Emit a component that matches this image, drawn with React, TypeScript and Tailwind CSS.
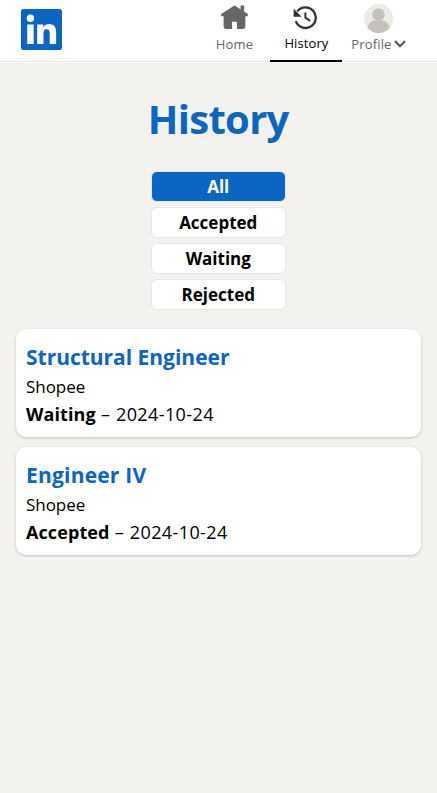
import React from "react";

const filters = ["All", "Accepted", "Waiting", "Rejected"];

const applications = [
  { title: "Structural Engineer", tracking: "tracking-[-0.02px]", company: "Shopee", status: "Waiting", date: "2024-10-24" },
  { title: "Engineer IV", tracking: "tracking-[0.2px]", company: "Shopee", status: "Accepted", date: "2024-10-24" },
];

function Logo() {
  return (
    <svg viewBox="0 0 41 41" className="ml-[21px] mt-[9px] size-[41px] shrink-0">
      <rect width="41" height="41" rx="2.8" fill="#0a66c2" />
      <circle cx="9.4" cy="9.2" r="3.7" fill="#fff" />
      <path fill="#fff" d="M6.2 15.6h6.500v19.300H6.200zM16.200 15.600h5.900v2.700c.9-1.700 3-3.200 6-3.200 5.600 0 7 3.600 7 8.800v11h-6.400v-9.600c0-2.800-.4-5-3-5-2.700 0-3.200 2.100-3.200 4.900v9.700h-6.300z" />
    </svg>
  );
}

function HomeIcon() {
  return (
    <svg viewBox="0 0 24 24" className="mt-[3px] size-[29px]" fill="#666">
      <path d="M23 9v2h-2v8.500a2 2 0 01-2 2h-5v-6h-4v6H5a2 2 0 01-2-2V11H1V9l11-7 5 3.180V2h3v5.090z" />
    </svg>
  );
}

function HistoryIcon() {
  return (
    <svg viewBox="0 0 26 26" className="mt-1 size-[26px]" fill="none" stroke="#333" strokeWidth="2.3">
      <path d="M2.8 17.2A10.3 10.3 0 1 0 4.3 7.4" />
      <path d="M12.400 8.400v5.200l4.700 3.200" strokeWidth="2" />
      <path d="M.6 4.800v7.900h8z" fill="#333" stroke="none" />
    </svg>
  );
}

function Avatar() {
  return (
    <svg viewBox="0 0 29 29" className="mt-[3.5px] size-[29px]">
      <defs>
        <clipPath id="avatar-circle">
          <circle cx="14.5" cy="14.5" r="14.5" />
        </clipPath>
      </defs>
      <circle cx="14.5" cy="14.5" r="14.5" fill="#edebe6" />
      <g clipPath="url(#avatar-circle)" fill="#c5c2bb">
        <circle cx="14.5" cy="10.6" r="6.3" />
        <path d="M3 25.500c.8-5.600 4-9.300 8-9.300h7c4 0 7.200 3.700 8 9.300v4H3z" />
      </g>
    </svg>
  );
}

export default function App() {
  return (
    <div className="min-h-[793px] w-full bg-[#f3f2ee] font-['Open_Sans','Noto_Sans',sans-serif] text-black">
      <header className="flex h-[63px] border-b border-[#fafaf9] bg-white">
        <div className="flex h-[62px] w-full border-b border-[#e8e8e8]">
          <Logo />
          <nav className="ml-auto mr-[22.600px] flex h-[62px] text-[13px] leading-[18px] text-[#666]">
            <a className="flex w-[72px] flex-col items-center">
              <HomeIcon />
              <span className="mt-[3px] tracking-[0.2px]">Home</span>
            </a>
            <a className="flex w-[72px] flex-col items-center border-b-2 border-black text-black">
              <HistoryIcon />
              <span className="mt-1 tracking-[0.1px]">History</span>
            </a>
            <a className="flex w-[72px] flex-col items-center">
              <Avatar />
              <span className="mt-[2.5px] flex items-center gap-0.5 tracking-[0.15px]">
                Profile
                <svg viewBox="0 0 12 8" className="h-2 w-3" fill="none" stroke="#555" strokeWidth="2">
                  <path d="M1 1l5 5.300L11 1" />
                </svg>
              </span>
            </a>
          </nav>
        </div>
      </header>
      <main className="pl-[15.5px] pr-4 pt-[26px]">
        <h1 className="text-center text-[40px] font-bold leading-[60px] tracking-[-0.7px] text-[#0a66c2]">History</h1>
        <div className="mx-auto mt-[22px] flex w-[135px] flex-col gap-[5px]">
          {filters.map((name, i) => (
            <button
              key={name}
              className={`h-[31px] rounded-md border border-[#dfe8f1] text-[17px] font-bold leading-[29px] ${i === 0 ? "bg-[#0a66c2] text-white" : "bg-white"}`}
            >
              {name}
            </button>
          ))}
        </div>
        <section className="mt-[19px] flex flex-col gap-[10px]">
          {applications.map((job) => (
            <article key={job.title} className="h-[108px] rounded-[10px] bg-white px-[10.5px] pt-[13px] shadow-[0_1px_3px_rgba(0,0,0,0.2)]">
              <h2 className={`text-[21px] font-bold leading-[31px] text-[#0a66c2] ${job.tracking}`}>{job.title}</h2>
              <p className="text-[17px] leading-[28px] tracking-[-0.05px]">{job.company}</p>
              <p className="text-[18px] leading-[27px] tracking-[0.4px]">
                <b className="tracking-[0.1px]">{job.status}</b>
                <span className="tracking-[0.6px]"> – </span>
                {job.date}
              </p>
            </article>
          ))}
        </section>
      </main>
    </div>
  );
}
